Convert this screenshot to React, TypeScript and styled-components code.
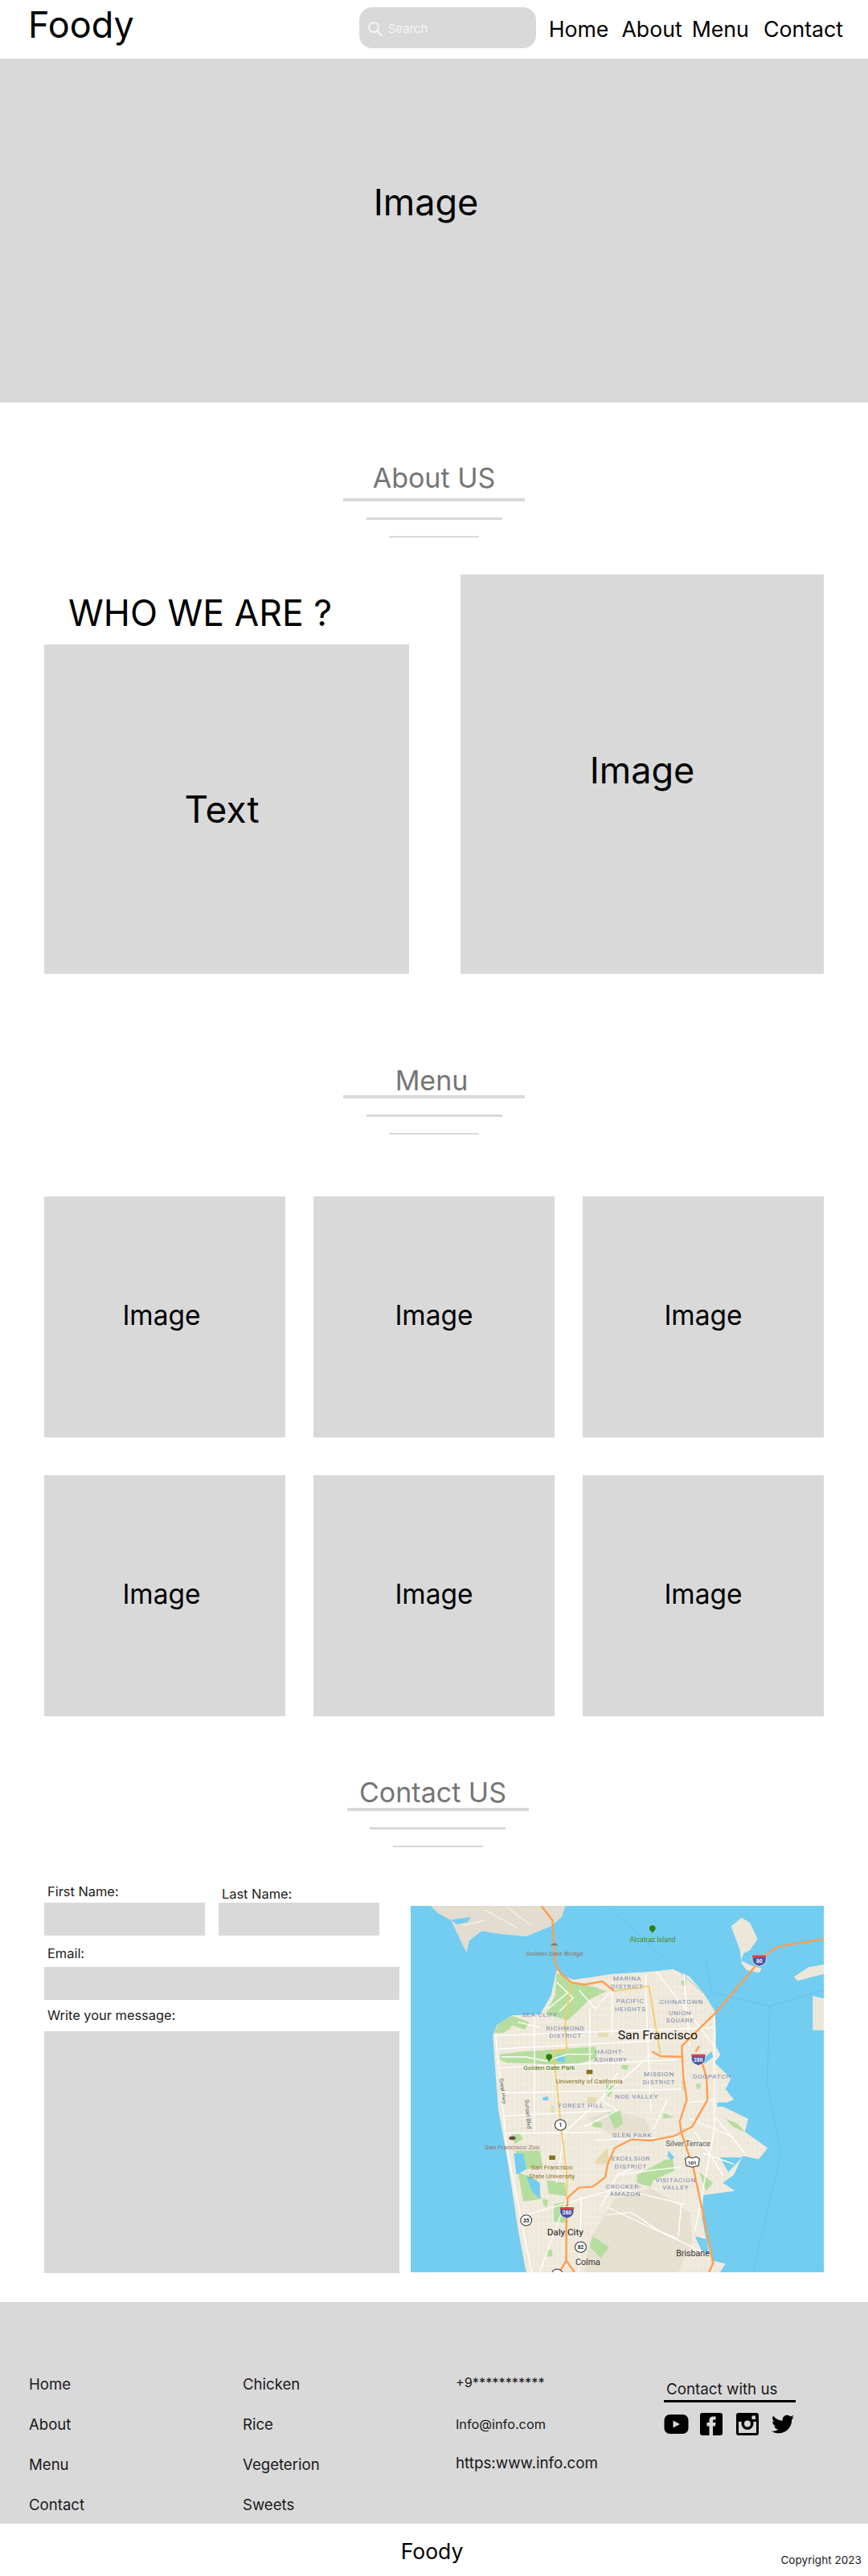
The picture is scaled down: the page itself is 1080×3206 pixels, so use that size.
import React from "react";
import styled, { createGlobalStyle } from "styled-components";
import { FaTwitter } from "react-icons/fa";

const gray = "#d9d9d9";

const GlobalStyle = createGlobalStyle`
  html, body {
    margin: 0;
    padding: 0;
    background: #fff;
  }
  body {
    font-family: Inter, "Liberation Sans", sans-serif;
    color: #000;
  }
  * {
    box-sizing: border-box;
  }
`;

const Page = styled.div`
  width: 1080px;
  height: 3206px;
  overflow: hidden;
`;

/* header */
const Header = styled.header`
  display: flex;
  align-items: center;
  height: 73px;
  padding: 0 31px 0 35px;
`;

const Logo = styled.div`
  font-size: 45px;
  line-height: 58px;
  margin-top: -12px;
  margin-right: auto;
`;

const SearchBox = styled.div`
  display: flex;
  align-items: center;
  gap: 6px;
  width: 220px;
  height: 51px;
  padding: 2px 10px 0;
  margin-top: -4px;
  border-radius: 16px;
  background: ${gray};
  color: #f4f4f4;
  font-size: 15px;
`;

const Nav = styled.nav`
  display: flex;
  margin-left: 16px;
  margin-top: -2px;
  font-size: 26.7px;
  line-height: 34px;
`;

const NavLink = styled.a<{ $gap?: number }>`
  margin-left: ${({ $gap }) => $gap || 0}px;
`;

/* grey placeholders */
const Placeholder = styled.div<{ $w?: string; $h: number; $size: number; $pull?: number; $lift?: number }>`
  display: flex;
  align-items: center;
  justify-content: center;
  flex-shrink: 0;
  width: ${({ $w }) => $w || "100%"};
  height: ${({ $h }) => $h}px;
  padding-right: ${({ $pull }) => $pull || 0}px;
  padding-bottom: ${({ $lift }) => $lift || 0}px;
  background: ${gray};
  font-size: ${({ $size }) => $size}px;
`;

/* section title with the three shrinking rules */
const Heading = styled.div<{ $top: number; $shift?: number }>`
  display: flex;
  flex-direction: column;
  align-items: center;
  margin-top: ${({ $top }) => $top}px;
  padding-left: ${({ $shift }) => $shift || 0}px;
`;

const HeadingText = styled.h2<{ $gap: number; $nudge?: number }>`
  margin: 0 0 ${({ $gap }) => $gap}px;
  padding-right: ${({ $nudge }) => $nudge || 0}px;
  color: #757575;
  font-size: 34px;
  font-weight: 400;
  line-height: 44px;
`;

const Rule = styled.div<{ $w: number; $h: number; $gap: number }>`
  width: ${({ $w }) => $w}px;
  height: ${({ $h }) => $h}px;
  margin-top: ${({ $gap }) => $gap}px;
  background: ${gray};
`;

type SectionHeadingProps = { title: string; top: number; gap: number; shift?: number; nudge?: number };

const SectionHeading = ({ title, top, gap, shift, nudge }: SectionHeadingProps) => (
  <Heading $top={top} $shift={shift}>
    <HeadingText $gap={gap} $nudge={nudge}>
      {title}
    </HeadingText>
    <Rule $w={226} $h={4} $gap={0} />
    <Rule $w={169} $h={3} $gap={20} />
    <Rule $w={112} $h={2} $gap={20} />
  </Heading>
);

/* about */
const AboutRow = styled.section`
  display: flex;
  justify-content: space-between;
  align-items: flex-end;
  padding: 0 55px;
  margin-top: 46px;
`;

const AboutLeft = styled.div`
  display: flex;
  flex-direction: column;
  width: 454px;
`;

const WhoTitle = styled.h3`
  margin: 0 0 12px 30px;
  font-size: 44.5px;
  font-weight: 400;
  line-height: 54px;
`;

/* menu */
const MenuGrid = styled.section`
  display: grid;
  grid-template-columns: repeat(3, 300px);
  justify-content: space-between;
  row-gap: 47px;
  padding: 0 55px;
  margin-top: 77px;
`;

/* contact */
const ContactRow = styled.section`
  display: flex;
  justify-content: space-between;
  align-items: flex-start;
  padding: 0 55px;
  margin-top: 45px;
`;

const Form = styled.form`
  display: flex;
  flex-direction: column;
  width: 442px;
`;

const NameRow = styled.div`
  display: flex;
  gap: 17px;
`;

const Field = styled.div<{ $w?: number }>`
  display: flex;
  flex-direction: column;
  width: ${({ $w }) => ($w ? `${$w}px` : "100%")};
`;

const Label = styled.label<{ $top?: number }>`
  height: 20px;
  margin-top: ${({ $top }) => $top || 0}px;
  padding-left: 4px;
  color: #1a1a1a;
  font-size: 16.4px;
  line-height: 20px;
`;

const Input = styled.div<{ $h: number; $gap?: number }>`
  height: ${({ $h }) => $h}px;
  margin-top: ${({ $gap }) => $gap || 0}px;
  background: ${gray};
`;

const MapFrame = styled.div`
  width: 514px;
  height: 456px;
  margin-top: 28px;
  overflow: hidden;
  background: #72cdf1;

  svg {
    display: block;
    width: 100%;
    height: 100%;
  }
`;

/* footer */
const Footer = styled.footer`
  display: grid;
  grid-template-columns: 266px 265px 259px 1fr;
  height: 276px;
  padding: 91px 0 0 36px;
  margin-top: 36px;
  background: ${gray};
`;

const FooterColumn = styled.ul`
  display: flex;
  flex-direction: column;
  gap: 28px;
  margin: 0;
  padding: 0;
  list-style: none;
  color: #1a1a1a;
  font-size: 18.6px;
  line-height: 22px;
`;

const InfoColumn = styled.div`
  display: flex;
  flex-direction: column;
  margin-top: -2px;
  color: #1a1a1a;
`;

const InfoLine = styled.div<{ $size: number; $h: number }>`
  height: ${({ $h }) => $h}px;
  font-size: ${({ $size }) => $size}px;
  line-height: 22px;
  white-space: nowrap;
`;

const SocialColumn = styled.div`
  display: flex;
  flex-direction: column;
  align-items: flex-start;
  padding-top: 7px;
`;

const SocialTitle = styled.div`
  width: 164px;
  padding: 0 0 2px 3px;
  border-bottom: 3px solid #000;
  color: #1a1a1a;
  font-size: 18.8px;
  line-height: 22px;
`;

const SocialIcons = styled.div`
  display: flex;
  align-items: center;
  margin-top: 13px;
`;

const SocialIcon = styled.span<{ $w: number; $gap?: number }>`
  display: flex;
  width: ${({ $w }) => $w}px;
  margin-right: ${({ $gap }) => $gap || 0}px;
`;

const BottomBar = styled.div`
  position: relative;
  height: 65px;
  padding-top: 17px;
  padding-right: 5px;
  text-align: center;
  font-size: 26.5px;
  line-height: 34px;
`;

const Copyright = styled.div`
  position: absolute;
  right: 8px;
  top: 37px;
  color: #1a1a1a;
  font-size: 13.6px;
  line-height: 17px;
`;

/* icons */
const SearchIcon = () => (
  <svg width="20" height="20" viewBox="0 0 20 20" fill="none" stroke="#f4f4f4" strokeWidth="2" strokeLinecap="round">
    <circle cx="8" cy="8" r="6" />
    <path d="M12.5 12.5L18 18.5" />
  </svg>
);

const YoutubeIcon = () => (
  <svg width="31" height="26" viewBox="0 0 31 26">
    <rect x="0.5" y="1" width="30" height="24" rx="7" fill="#000" />
    <path d="M11.5 8.5L20 13L11.5 17.5Z" fill={gray} />
  </svg>
);

const FacebookIcon = () => (
  <svg width="28" height="28" viewBox="0 0 28 28">
    <rect width="28" height="28" rx="3" fill="#000" />
    <path d="M11.5 28V16.5H8.5V12H11.5V9C11.5 6 13.5 4.5 16 4.5H19.5V8.5H17.5C16.5 8.5 16 9 16 10V12H19.5L19 16.5H16V28Z" fill={gray} />
  </svg>
);

const InstagramIcon = () => (
  <svg width="28" height="28" viewBox="0 0 28 28">
    <rect width="28" height="28" rx="3" fill="#000" />
    <rect x="3" y="11" width="22" height="14" fill={gray} />
    <circle cx="14" cy="13.5" r="7.5" fill="#000" />
    <circle cx="14" cy="13.5" r="4" fill={gray} />
    <rect x="19.5" y="3.5" width="4.5" height="4.5" rx="1" fill={gray} />
  </svg>
);

/* map: coordinates follow a 1492 x 1368 working grid */
const streets = [
  "M335 520 L1130 490", "M350 570 L900 540", "M355 640 L1000 610", "M360 735 L1010 720", "M370 820 L760 800",
  "M380 885 L720 880", "M480 440 L480 880", "M680 420 L680 700", "M760 320 L760 520", "M880 290 L900 800",
  "M1020 290 L1040 560", "M1130 440 L1130 870 L1060 1250", "M920 280 L1130 560", "M600 870 L900 590",
  "M340 520 L380 940 L470 1404", "M450 1190 L780 1090 L1020 1150", "M650 1120 L640 1404", "M780 1040 L1010 1010",
  "M700 910 L1000 900", "M740 1160 L1010 1290 L1110 1340", "M1010 1150 L1000 1270", "M560 1070 L590 870",
  "M1040 770 L1130 760", "M1130 820 L1240 960", "M1060 880 L1160 1040", "M600 1120 L500 1400",
  "M560 320 L620 380 L570 430", "M640 350 L700 420 L750 360", "M530 420 L600 360", "M420 470 L500 490",
  "M360 600 L450 600 L520 615 L600 590 L690 590", "M780 660 L720 760 L780 800 L660 860", "M740 1190 L830 1180 L930 1250 L1000 1280",
  "M850 1010 L780 1040 L720 1160", "M960 760 L910 870", "M1040 830 L1200 900", "M1090 960 L1200 1000",
];

const parks = [
  "M560 285 L610 318 L700 340 L740 355 L680 385 L625 440 L600 462 L520 440 L555 370Z",
  "M355 590 L440 580 L700 562 L705 605 L640 625 L540 628 L380 622 L355 610Z",
  "M335 510 L350 475 L400 447 L462 470 L445 498 L400 482 L370 510Z",
  "M395 890 L425 885 L440 905 L410 925Z",
  "M410 950 L500 950 L510 1010 L440 1020Z",
  "M420 1030 L490 1060 L505 1130 L440 1140Z",
  "M525 1060 L590 1070 L595 1120 L530 1110Z",
  "M550 1150 L600 1140 L595 1220 L550 1215Z",
  "M850 1040 L950 985 L980 980 L985 1025 L910 1060 L900 1085 L850 1070Z",
  "M1075 1030 L1125 1070 L1100 1100Z",
  "M690 840 L725 845 L720 865 L690 860Z",
  "M745 810 L790 800 L800 850 L770 870Z",
  "M945 810 L985 825 L945 830Z",
  "M1170 830 L1215 850 L1240 880 L1195 860Z",
  "M740 700 L770 710 L750 750 L735 740Z",
  "M795 630 L820 630 L815 650 L795 645Z",
  "M1065 700 L1080 700 L1078 720 L1065 718Z",
  "M510 1130 L530 1135 L525 1160 L510 1150Z",
  "M690 1270 L750 1310 L720 1350 L680 1310Z",
  "M525 1320 L545 1320 L545 1345 L525 1345Z",
  "M1010 315 L1030 315 L1025 335 L1010 330Z",
];

const tanBlocks = [
  "M700 985 L745 940 L750 985 L745 1000 L700 1000Z",
  "M710 510 L745 510 L745 525 L710 525Z",
  "M540 780 L550 780 L550 815 L540 815Z",
  "M370 485 L395 485 L395 500 L370 500Z",
  "M670 750 L705 750 L705 775 L670 775Z",
  "M1010 690 L1025 690 L1030 725 L1015 725Z",
];

const waterBits = [
  "M510 750 L530 748 L530 762 L510 762Z", "M560 590 L590 600 L590 620 L560 615Z", "M965 950 L985 975 L975 985 L960 970Z",
  "M1085 610 L1120 580 L1125 600 L1095 625Z", "M1140 770 L1200 770 L1180 785 L1140 785Z", "M1150 975 L1230 975 L1180 1030Z",
  "M405 960 L415 1040 L450 1020 L440 960Z", "M450 1040 L500 1070 L500 1130 L470 1100Z", "M1060 1270 L1100 1280 L1112 1340 L1085 1325Z",
];

type MapLabel = { x: number; y: number; text: string; size?: number; fill?: string };

const districtColor = "#8088ad";
const mapLabels: MapLabel[] = [
  { x: 907, y: 170, text: "Alcatraz Island", size: 25, fill: "#4f8a10" },
  { x: 553, y: 223, text: "Golden Gate Bridge", size: 24, fill: "#8f7263" },
  { x: 815, y: 315, text: "MARINA", fill: districtColor },
  { x: 815, y: 344, text: "DISTRICT", fill: districtColor },
  { x: 826, y: 400, text: "PACIFIC", fill: districtColor },
  { x: 826, y: 429, text: "HEIGHTS", fill: districtColor },
  { x: 1011, y: 402, text: "CHINATOWN", fill: districtColor },
  { x: 1006, y: 444, text: "UNION", fill: districtColor },
  { x: 1006, y: 472, text: "SQUARE", fill: districtColor },
  { x: 500, y: 449, text: "SEA CLIFF", fill: districtColor },
  { x: 592, y: 500, text: "RICHMOND", fill: districtColor },
  { x: 592, y: 529, text: "DISTRICT", fill: districtColor },
  { x: 925, y: 535, text: "San Francisco", size: 46, fill: "#111" },
  { x: 750, y: 589, text: "HAIGHT-", fill: districtColor },
  { x: 755, y: 617, text: "ASHBURY", fill: districtColor },
  { x: 533, y: 649, text: "Golden Gate Park", size: 24, fill: "#3f7a12" },
  { x: 678, y: 700, text: "University of California", size: 24, fill: "#86711d" },
  { x: 930, y: 673, text: "MISSION", fill: districtColor },
  { x: 930, y: 701, text: "DISTRICT", fill: districtColor },
  { x: 1121, y: 680, text: "DOGPATCH", fill: districtColor },
  { x: 849, y: 756, text: "NOE VALLEY", fill: districtColor },
  { x: 648, y: 790, text: "FOREST HILL", fill: districtColor },
  { x: 833, y: 900, text: "GLEN PARK", fill: districtColor },
  { x: 1035, y: 933, text: "Silver Terrace", size: 27, fill: "#555" },
  { x: 400, y: 946, text: "San Francisco Zoo", size: 24, fill: "#8f7263" },
  { x: 828, y: 988, text: "EXCELSIOR", fill: districtColor },
  { x: 828, y: 1017, text: "DISTRICT", fill: districtColor },
  { x: 543, y: 1021, text: "San Francisco", size: 24, fill: "#86711d" },
  { x: 543, y: 1053, text: "State University", size: 24, fill: "#86711d" },
  { x: 990, y: 1068, text: "VISITACION", fill: districtColor },
  { x: 990, y: 1096, text: "VALLEY", fill: districtColor },
  { x: 802, y: 1091, text: "CROCKER-", fill: districtColor },
  { x: 808, y: 1119, text: "AMAZON", fill: districtColor },
  { x: 591, y: 1265, text: "Daly City", size: 34, fill: "#111" },
  { x: 1052, y: 1345, text: "Brisbane", size: 31, fill: "#333" },
  { x: 673, y: 1378, text: "Colma", size: 31, fill: "#333" },
];

const Shield = ({ x, y, text }: { x: number; y: number; text: string }) => (
  <g>
    <path d={`M${x - 25} ${y - 16} H${x + 25} V${y + 4} Q${x + 22} ${y + 20} ${x} ${y + 26} Q${x - 22} ${y + 20} ${x - 25} ${y + 4}Z`} fill="#4a56a6" stroke="#fff" strokeWidth="2" />
    <rect x={x - 25} y={y - 16} width="50" height="9" fill="#d9434b" />
    <text x={x} y={y + 12} textAnchor="middle" fontSize="19" fontWeight="700" fill="#fff">
      {text}
    </text>
  </g>
);

const RouteBadge = ({ x, y, text }: { x: number; y: number; text: string }) => (
  <g>
    <circle cx={x} cy={y} r="20" fill="#fff" stroke="#333" strokeWidth="3" />
    <text x={x} y={y + 7} textAnchor="middle" fontSize="19" fontWeight="700" fill="#222">
      {text}
    </text>
  </g>
);

const MapDrawing = () => (
  <svg viewBox="33 36 1492 1368" preserveAspectRatio="none" fontFamily="Roboto, sans-serif">
    <defs>
      <pattern id="blocks" width="17" height="26" patternUnits="userSpaceOnUse">
        <rect width="17" height="26" fill="#eee8da" />
        <path d="M0 0H17M0 0V26" stroke="#f8f5ee" strokeWidth="2.5" />
      </pattern>
    </defs>
    {/* land */}
    <path d="M105 36H592L578 78L540 112L450 150L350 140L290 130L245 165L235 210L215 170L195 125L178 90L130 62Z" fill="#e2ddd0" />
    <path d="M300 50L420 120M380 40L470 110M220 110L300 90" fill="none" stroke="#f4f1ea" strokeWidth="4" />
    <path d="M178 88L250 78L240 96L200 105Z" fill="#72cdf1" />
    <path d="M1190 112L1228 80L1258 98L1286 160L1258 202L1236 212L1226 240L1262 258L1300 270L1292 286L1246 276L1228 252L1222 200Z" fill="#ece7da" />
    <path d="M1418 300L1470 265L1525 255V290L1430 316Z" fill="#ece7da" />
    <path d="M1485 372L1525 382V500H1485Z" fill="#ece7da" />
    <path
      d="M330 520L345 480L400 445L500 442L540 370L560 275L590 300L620 312L700 300L760 290L850 285L920 280L980 272L1040 300L1090 360L1132 430L1135 500L1135 560L1152 592L1130 620L1190 680L1170 720L1200 760L1150 780L1210 810L1252 830L1240 880L1322 940L1290 982L1232 970L1200 1040L1160 1070L1205 1100L1090 1116L1085 1200L1100 1280L1122 1360L1170 1372L1150 1404H450L420 1240L385 1000L350 800L335 600Z"
      fill="url(#blocks)"
    />
    <path d="M770 1130L900 1090L1040 1180L1050 1290L1000 1404H660L680 1280Z" fill="#e6e0d0" />
    <path d="M670 830L760 800L880 830L900 880L760 890Z" fill="#e6e0d0" />
    {tanBlocks.map((d) => (
      <path key={d} d={d} fill="#e6dcb4" />
    ))}
    {parks.map((d) => (
      <path key={d} d={d} fill="#b5de9e" />
    ))}
    {waterBits.map((d) => (
      <path key={d} d={d} fill="#72cdf1" />
    ))}
    <path d="M1100 240L1120 360L1330 410L1525 350M1330 410L1320 700L1370 960L1270 1404M740 36L1110 380" fill="none" stroke="#5fbde6" strokeWidth="2" />
    {streets.map((d) => (
      <path key={d} d={d} fill="none" stroke="#fff" strokeWidth="4" />
    ))}
    {/* highways */}
    <path d="M595 1130L598 1050L575 850L548 578L596 572L592 470L612 320M770 354L893 336L935 590" fill="none" stroke="#f6cb5e" strokeWidth="5" />
    <path
      d="M505 36L545 90L555 250L575 290L615 322L660 330L725 318L768 354M1525 160L1360 188L1310 222L1130 440L1060 510L1012 560L1018 680L1030 760L1005 840L1010 880L1055 1020L1090 1190L1125 1370L1110 1404M905 580L935 597L1015 600M1075 560L1062 580M1085 620L1102 680L1105 760L1050 860L985 895L900 912L830 908L770 940L745 1000L735 1050L690 1085L640 1088L600 1125L595 1240L595 1360L625 1404M595 1360L570 1404"
      fill="none"
      stroke="#ff9e50"
      strokeWidth="7"
      strokeLinejoin="round"
    />
    <Shield x={1292} y={236} text="80" />
    <Shield x={1072} y={606} text="280" />
    <Shield x={597} y={1177} text="280" />
    <RouteBadge x={574} y={854} text="1" />
    <RouteBadge x={450} y={1210} text="35" />
    <RouteBadge x={647} y={1310} text="82" />
    <RouteBadge x={562} y={1412} text="" />
    <path d="M1024 980L1036 973L1050 978L1064 973L1076 980L1072 1006L1050 1012L1028 1006Z" fill="#fff" stroke="#333" strokeWidth="3" />
    <text x={1050} y={1001} textAnchor="middle" fontSize="18" fontWeight="700" fill="#222">
      101
    </text>
    {/* point of interest markers */}
    <circle cx="906" cy="120" r="11" fill="#2e7d13" />
    <rect x="903" y="122" width="6" height="14" fill="#2e7d13" />
    <circle cx="533" cy="600" r="11" fill="#2e7d13" />
    <rect x="530" y="602" width="6" height="14" fill="#2e7d13" />
    <rect x="668" y="648" width="22" height="16" fill="#86711d" />
    <rect x="533" y="968" width="22" height="16" fill="#86711d" />
    <ellipse cx="400" cy="903" rx="12" ry="7" fill="#6d4a3a" />
    <path d="M538 184Q552 166 567 184Z" fill="#8f7263" />
    {mapLabels.map((l) => (
      <text
        key={`${l.text}${l.y}`}
        x={l.x}
        y={l.y}
        textAnchor="middle"
        fontSize={l.size || 24}
        fill={l.fill}
        letterSpacing={l.size ? 0 : 2}
      >
        {l.text}
      </text>
    ))}
    <text x={352} y={680} fontSize="21" fill="#666" transform="rotate(82 352 680)">
      Great Hwy
    </text>
    <text x={445} y={760} fontSize="21" fill="#666" transform="rotate(85 445 760)">
      Sunset Blvd
    </text>
  </svg>
);

const footerLinks = ["Home", "About", "Menu", "Contact"];
const footerFoods = ["Chicken", "Rice", "Vegeterion", "Sweets"];

const App: React.FC = () => {
  return (
    <Page>
      <GlobalStyle />
      <Header>
        <Logo>Foody</Logo>
        <SearchBox>
          <SearchIcon />
          Search
        </SearchBox>
        <Nav>
          <NavLink>Home</NavLink>
          <NavLink $gap={16}>About</NavLink>
          <NavLink $gap={12}>Menu</NavLink>
          <NavLink $gap={18}>Contact</NavLink>
        </Nav>
      </Header>

      <Placeholder $h={428} $size={45} $pull={20} $lift={71}>
        Image
      </Placeholder>

      <SectionHeading title="About US" top={72} gap={3} />
      <AboutRow>
        <AboutLeft>
          <WhoTitle>WHO WE ARE ?</WhoTitle>
          <Placeholder $h={410} $size={46} $pull={12}>
            Text
          </Placeholder>
        </AboutLeft>
        <Placeholder $w="452px" $h={497} $size={45} $lift={11}>
          Image
        </Placeholder>
      </AboutRow>

      <SectionHeading title="Menu" top={111} gap={-4} nudge={6} />
      <MenuGrid>
        {[0, 1, 2, 3, 4, 5].map((i) => (
          <Placeholder key={i} $h={300} $size={33.5} $pull={i % 3 === 0 ? 8 : 0} $lift={4}>
            Image
          </Placeholder>
        ))}
      </MenuGrid>

      <SectionHeading title="Contact US" top={73} gap={-3} shift={9} nudge={12} />
      <ContactRow>
        <Form>
          <NameRow>
            <Field $w={200}>
              <Label>First Name:</Label>
              <Input $h={41} $gap={4} />
            </Field>
            <Field $w={200}>
              <Label $top={3}>Last Name:</Label>
              <Input $h={41} $gap={1} />
            </Field>
          </NameRow>
          <Field>
            <Label $top={12}>Email:</Label>
            <Input $h={41} $gap={7} />
          </Field>
          <Field>
            <Label $top={9}>Write your message:</Label>
            <Input $h={301} $gap={10} />
          </Field>
        </Form>
        <MapFrame>
          <MapDrawing />
        </MapFrame>
      </ContactRow>

      <Footer>
        <FooterColumn>
          {footerLinks.map((item) => (
            <li key={item}>{item}</li>
          ))}
        </FooterColumn>
        <FooterColumn>
          {footerFoods.map((item) => (
            <li key={item}>{item}</li>
          ))}
        </FooterColumn>
        <InfoColumn>
          <InfoLine $size={16.3} $h={52}>
            +9***********
          </InfoLine>
          <InfoLine $size={16.3} $h={49}>
            Info@info.com
          </InfoLine>
          <InfoLine $size={18.8} $h={49}>
            https:www.info.com
          </InfoLine>
        </InfoColumn>
        <SocialColumn>
          <SocialTitle>Contact with us</SocialTitle>
          <SocialIcons>
            <SocialIcon $w={31} $gap={14}>
              <YoutubeIcon />
            </SocialIcon>
            <SocialIcon $w={28} $gap={17}>
              <FacebookIcon />
            </SocialIcon>
            <SocialIcon $w={28} $gap={16}>
              <InstagramIcon />
            </SocialIcon>
            <SocialIcon $w={28}>
              <FaTwitter size={28} color="#000" />
            </SocialIcon>
          </SocialIcons>
        </SocialColumn>
      </Footer>

      <BottomBar>
        Foody
        <Copyright>Copyright 2023</Copyright>
      </BottomBar>
    </Page>
  );
};

export default App;
